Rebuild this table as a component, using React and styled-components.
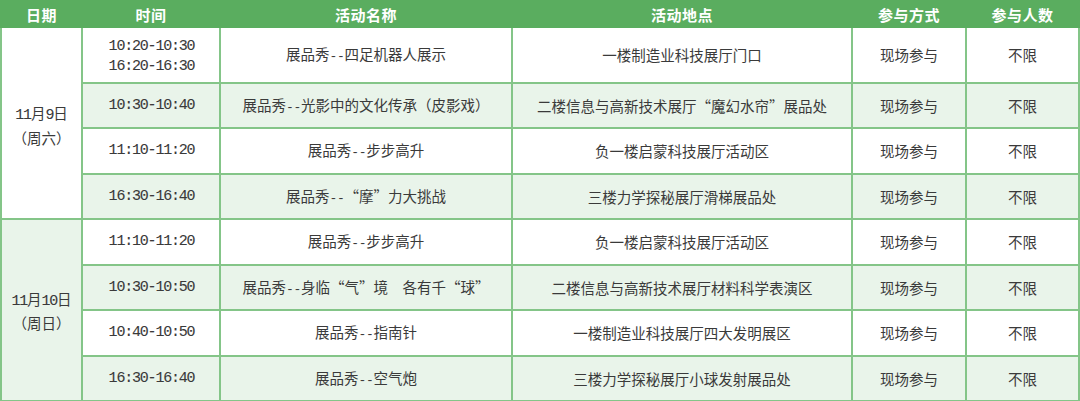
import React from "react";
import styled, { createGlobalStyle } from "styled-components";

const Global = createGlobalStyle`
  html, body { margin: 0; padding: 0; background: #ffffff; }
  body { font-family: "Noto Sans CJK SC", "Liberation Sans", sans-serif; }
`;

const GREEN = "#5aad5f";
const LINE = "#84c588";
const TINT = "#e9f4ea";

const Table = styled.table`
  width: 1078px;
  border-collapse: collapse;
  table-layout: fixed;
  color: #3a3a3a;
  font-family: "Noto Sans CJK SC", "Liberation Sans", sans-serif;
  font-size: 14.5px;
`;

const HeadRow = styled.tr`
  height: 26px;
`;

const Th = styled.th`
  background: ${GREEN};
  color: #ffffff;
  font-weight: 700;
  font-size: 15px;
  letter-spacing: 0.5px;
  text-align: center;
  vertical-align: middle;
  padding: 0;
  line-height: 1;
  border: 2px solid ${GREEN};
`;

const Row = styled.tr`
  height: ${(p) => p.$h}px;
  background: ${(p) => (p.$tint ? TINT : "#ffffff")};
`;

const Td = styled.td`
  border: 2px solid ${LINE};
  text-align: center;
  vertical-align: middle;
  padding: 0;
  line-height: 1.45;
  white-space: nowrap;
`;

const Mono = styled.span`
  font-family: "Liberation Mono", monospace;
  font-size: 15px;
  letter-spacing: -1.2px;
  -webkit-text-stroke: 0.1px #3a3a3a;
`;

const Dash = styled.span`
  font-family: "Liberation Mono", monospace;
  font-size: 13px;
  letter-spacing: -0.4px;
`;

const DateCell = styled(Td)`
  background: ${(p) => (p.$tint ? TINT : "#ffffff")};
  line-height: ${(p) => p.$lh}px;
  padding-top: ${(p) => p.$pt}px;
`;

const TimeCell = styled(Td)`
  line-height: 20px;
  padding-top: ${(p) => (p.$multi ? 3 : 0)}px;
`;

const TimeLine = styled.div`
  font-family: "Liberation Mono", monospace;
  font-size: 15px;
  letter-spacing: -1.2px;
  -webkit-text-stroke: 0.1px #3a3a3a;
  padding-left: 1px;
`;

const groups = [
  {
    date: ["11", "9"],
    week: "（周六）",
    tint: false,
    lh: 22,
    pt: 4,
    rows: [
      {
        time: ["10:20-10:30", "16:20-16:30"],
        name: "展品秀--四足机器人展示",
        place: "一楼制造业科技展厅门口",
        h: 56,
      },
      {
        time: ["10:30-10:40"],
        name: "展品秀--光影中的文化传承（皮影戏）",
        place: "二楼信息与高新技术展厅“魔幻水帘”展品处",
        h: 45,
      },
      {
        time: ["11:10-11:20"],
        name: "展品秀--步步高升",
        place: "负一楼启蒙科技展厅活动区",
        h: 46,
      },
      {
        time: ["16:30-16:40"],
        name: "展品秀--“摩”力大挑战",
        place: "三楼力学探秘展厅滑梯展品处",
        h: 45,
      },
    ],
  },
  {
    date: ["11", "10"],
    week: "（周日）",
    tint: true,
    lh: 21,
    pt: 0,
    rows: [
      {
        time: ["11:10-11:20"],
        name: "展品秀--步步高升",
        place: "负一楼启蒙科技展厅活动区",
        h: 46,
      },
      {
        time: ["10:30-10:50"],
        name: "展品秀--身临“气”境　各有千“球”",
        place: "二楼信息与高新技术展厅材料科学表演区",
        h: 45,
      },
      {
        time: ["10:40-10:50"],
        name: "展品秀--指南针",
        place: "一楼制造业科技展厅四大发明展区",
        h: 46,
      },
      {
        time: ["16:30-16:40"],
        name: "展品秀--空气炮",
        place: "三楼力学探秘展厅小球发射展品处",
        h: 45,
      },
    ],
  },
];

function Name({ text }) {
  const [head, tail] = text.split("--");
  return (
    <>
      {head}
      <Dash>--</Dash>
      {tail}
    </>
  );
}

export default function App() {
  let idx = 0;
  return (
    <>
      <Global />
      <Table>
        <colgroup>
          <col style={{ width: 81 }} />
          <col style={{ width: 138 }} />
          <col style={{ width: 292 }} />
          <col style={{ width: 340 }} />
          <col style={{ width: 114 }} />
          <col style={{ width: 113 }} />
        </colgroup>
        <thead>
          <HeadRow>
            <Th>日期</Th>
            <Th>时间</Th>
            <Th>活动名称</Th>
            <Th>活动地点</Th>
            <Th>参与方式</Th>
            <Th>参与人数</Th>
          </HeadRow>
        </thead>
        <tbody>
          {groups.map((g) =>
            g.rows.map((r, i) => {
              const tint = idx % 2 === 1;
              idx += 1;
              return (
                <Row key={idx} $h={r.h} $tint={tint}>
                  {i === 0 && (
                    <DateCell
                      rowSpan={g.rows.length}
                      $tint={g.tint}
                      $lh={g.lh}
                      $pt={g.pt}
                    >
                      <Mono>{g.date[0]}</Mono>月<Mono>{g.date[1]}</Mono>日
                      <br />
                      {g.week}
                    </DateCell>
                  )}
                  <TimeCell $multi={r.time.length > 1}>
                    {r.time.map((t, k) => (
                      <TimeLine key={k}>{t}</TimeLine>
                    ))}
                  </TimeCell>
                  <Td>
                    <Name text={r.name} />
                  </Td>
                  <Td>{r.place}</Td>
                  <Td>现场参与</Td>
                  <Td>不限</Td>
                </Row>
              );
            })
          )}
        </tbody>
      </Table>
    </>
  );
}
